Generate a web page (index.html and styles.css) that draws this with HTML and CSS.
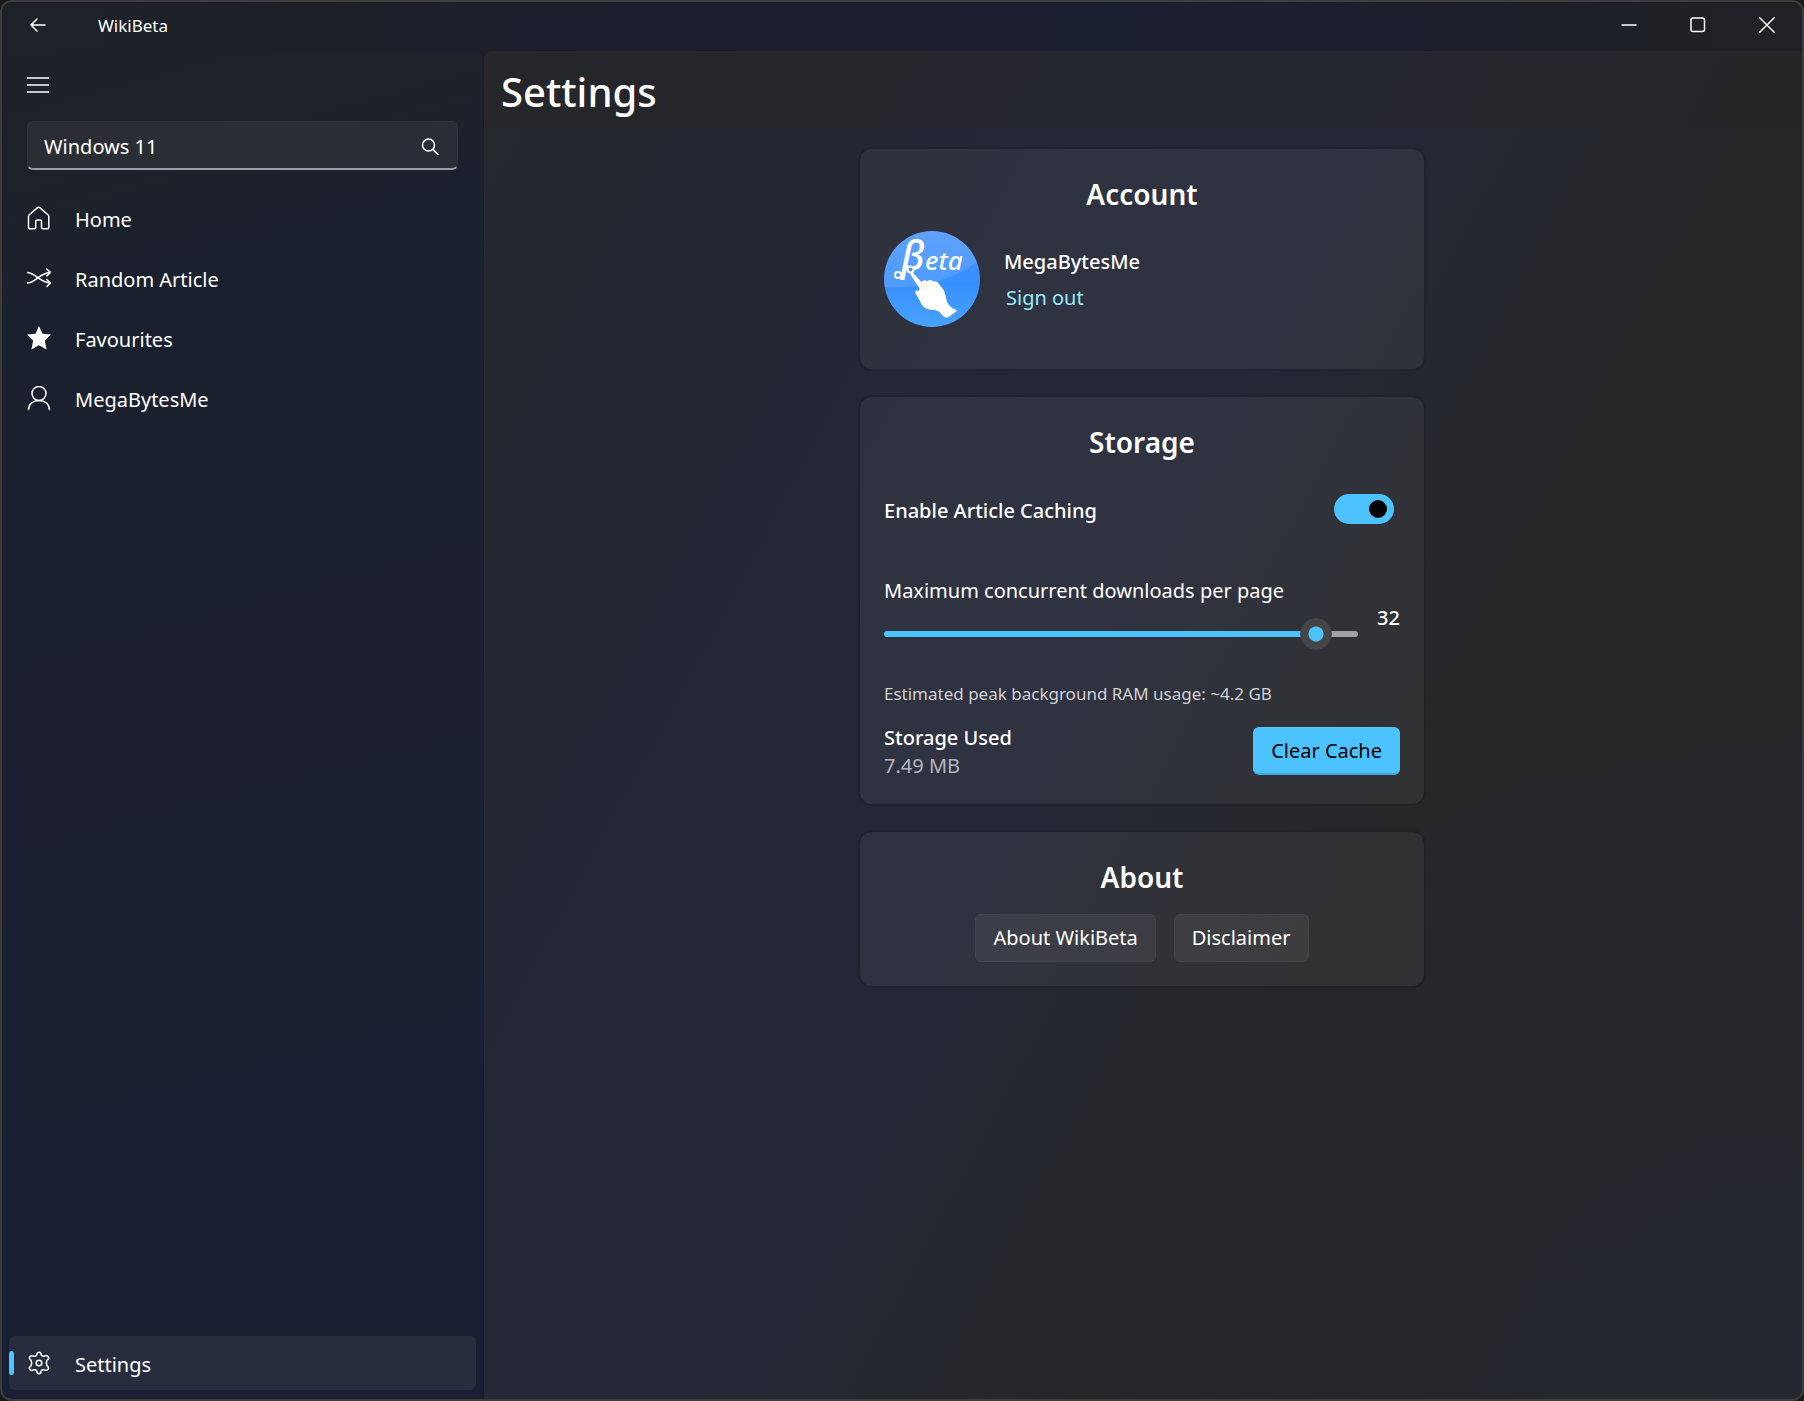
FILE: index.html
```html
<!DOCTYPE html>
<html lang="en-GB">
<head>
<meta charset="utf-8">
<meta name="viewport" content="width=device-width, initial-scale=1">
<title>WikiBeta</title>
<link rel="stylesheet" href="styles.css">
</head>
<body>
<div class="window">
  <header class="titlebar">
    <button class="back" type="button" aria-label="Back">
      <svg class="stroke" width="16" height="16" viewBox="0 0 16 16"><path d="M15 8H1M7 2L1 8l6 6"/></svg>
    </button>
    <span class="app-name">WikiBeta</span>
    <div class="captions">
      <button class="caption" type="button" aria-label="Minimise">
        <svg class="stroke" width="16" height="16" viewBox="0 0 16 16"><path d="M1 8h14"/></svg>
      </button>
      <button class="caption" type="button" aria-label="Maximise">
        <svg class="stroke" width="16" height="16" viewBox="0 0 16 16"><rect x="1" y="1" width="13.500" height="13.500" rx="2"/></svg>
      </button>
      <button class="caption" type="button" aria-label="Close">
        <svg class="stroke" width="16" height="16" viewBox="0 0 16 16"><path d="M.7.7l14.500 14.500M15.200.7L.7 15.200"/></svg>
      </button>
    </div>
  </header>

  <div class="shell">
    <nav class="sidebar" aria-label="Main">
      <button class="menu" type="button" aria-label="Toggle menu">
        <svg class="stroke" width="22" height="22" viewBox="0 0 22 22"><path d="M0 4h22M0 11h22M0 18h22"/></svg>
      </button>

      <form class="search" role="search">
        <input class="search-input" type="text" value="Windows 11" aria-label="Search articles">
        <button class="search-button" type="button" aria-label="Search">
          <svg class="stroke" width="18" height="18" viewBox="0 0 18 18"><circle cx="7.500" cy="7" r="6"/><path d="M11.900 11.400L17 16.500"/></svg>
        </button>
      </form>

      <ul class="nav-list">
        <li><a class="nav-item" href="#home">
          <svg class="stroke" width="24" height="24" viewBox="0 0 24 24"><path d="M10.500 1.600 2.300 8.800Q1.500 9.500 1.500 10.600V21Q1.500 22.800 3.300 22.800H7.200Q8.700 22.800 8.700 21.300V15.500Q8.700 14 10.200 14H13Q14.500 14 14.500 15.500V21.300Q14.500 22.800 16 22.800H20Q21.800 22.800 21.800 21V10.600Q21.800 9.500 21 8.800L12.800 1.600Q11.700.7 10.500 1.600Z"/></svg>
          <span>Home</span></a></li>
        <li><a class="nav-item" href="#random">
          <svg class="stroke" width="24" height="24" viewBox="0 0 24 24"><path d="M0 6.500C9 6.500 12 17 24 17M0 17C9 17 12 6.500 24 6.500M19.800 3l3.700 3.500-3.700 3.500M19.800 13.500l3.700 3.500-3.700 3.500"/></svg>
          <span>Random Article</span></a></li>
        <li><a class="nav-item" href="#favourites">
          <svg class="solid" width="24" height="24" viewBox="0 0 24 24"><path d="M12 0l3.500 7.700 8.500.9-6.200 5.800L19.600 23.500 12 19.300 4.400 23.500 6.200 14.400 0 8.600l8.500-.9z"/></svg>
          <span>Favourites</span></a></li>
        <li><a class="nav-item" href="#profile">
          <svg class="stroke" width="24" height="24" viewBox="0 0 24 24"><circle cx="12" cy="7.500" r="7"/><path d="M1.500 24C1.500 18 6 14.500 12 14.500S22.500 18 22.500 24"/></svg>
          <span>MegaBytesMe</span></a></li>
      </ul>

      <a class="nav-item nav-settings" href="#settings" aria-current="page">
        <svg class="stroke" width="24" height="24" viewBox="0 0 24 24"><path d="M9.600 4.300Q10 1.200 12 1.200T14.400 4.300Q14.900 5.600 17.500 5.100 20.200 3.800 21.300 5.800T20 9.200Q18.600 12 20 14.800 22.400 16.500 21.300 18.200T17.500 18.900Q14.900 18.400 14.400 19.700 14 22.800 12 22.800T9.600 19.700Q9.100 18.400 6.500 18.900 3.800 20.200 2.700 18.200T4 14.800Q5.400 12 4 9.200 1.600 7.500 2.700 5.800T6.500 5.100Q9.100 5.600 9.600 4.300Z"/><circle cx="12" cy="12" r="2.800"/></svg>
        <span>Settings</span></a>
    </nav>

    <main class="content">
      <h1 class="page-title">Settings</h1>
      <div class="cards">
        <section class="card">
          <h2 class="card-title">Account</h2>
          <div class="account">
            <svg class="avatar" viewBox="0 0 96 96" role="img" aria-label="Profile picture">
              <defs><linearGradient id="sky" x1="0" y1="0" x2="0" y2="1"><stop offset="0" stop-color="#4a94fc"/><stop offset=".55" stop-color="#378ffe"/><stop offset="1" stop-color="#48a2ff"/></linearGradient>
              <clipPath id="disc"><circle cx="48" cy="48" r="48"/></clipPath></defs>
              <g clip-path="url(#disc)">
                <rect width="96" height="96" fill="url(#sky)"/>
                <path d="M0 0H96V28C72 48 40 58 0 56Z" fill="#fff" opacity=".12"/>
              </g>
              <text class="mark-beta" x="17" y="39">β</text>
              <text class="mark-eta" x="41" y="39">eta</text>
              <g fill="#4a95ff" stroke="#fff" stroke-width="2"><circle cx="14" cy="44" r="3"/><circle cx="26.500" cy="38.500" r="3"/></g>
              <path d="M25.500 42Q27.500 39 30 43L37.500 51Q40 48 43 50.200 46.500 47.500 49.500 50.500 53 49.500 55.500 53.500L60 59.500Q62 66 63 70.500 64.500 76 73.500 79.500L64 86.500Q61 87 59 85L55 80.500Q51 78.500 45 78.500 38 77 36 70L31.500 62.500Q30.500 58.500 34.500 60L35.500 57.500Z" fill="#fff"/>
            </svg>
            <div class="account-text">
              <strong class="strong">MegaBytesMe</strong>
              <a class="signout" href="#signout">Sign out</a>
            </div>
          </div>
        </section>

        <section class="card">
          <h2 class="card-title">Storage</h2>
          <div class="toggle-row">
            <label class="strong toggle-label" for="caching">Enable Article Caching</label>
            <input class="toggle" id="caching" type="checkbox" role="switch" checked>
          </div>
          <div class="slider-row">
            <div class="slider-field">
              <label for="downloads">Maximum concurrent downloads per page</label>
              <input class="slider" id="downloads" type="range" min="0" max="34" value="32">
            </div>
            <output class="strong slider-value" for="downloads">32</output>
          </div>
          <p class="hint">Estimated peak background RAM usage: ~4.2 GB</p>
          <div class="used-row">
            <div class="used">
              <strong class="strong">Storage Used</strong>
              <span class="muted">7.49 MB</span>
            </div>
            <button class="button button-accent" type="button">Clear Cache</button>
          </div>
        </section>

        <section class="card">
          <h2 class="card-title">About</h2>
          <div class="about-actions">
            <button class="button" type="button">About WikiBeta</button>
            <button class="button" type="button">Disclaimer</button>
          </div>
        </section>
      </div>
    </main>
  </div>
</div>
</body>
</html>
```
FILE: styles.css
```css
*, *::before, *::after { box-sizing: border-box; }

body {
  margin: 0;
  background: #1a1a1a;
  color: #fff;
  font: 20px/28px "Noto Sans", "Open Sans", sans-serif;
}

h1, h2, p, ul { margin: 0; padding: 0; }
ul { list-style: none; }
a { color: inherit; text-decoration: none; }
button, input { font: inherit; color: inherit; }
button { padding: 0; border: 0; background: none; }
svg { display: block; flex: none; }

.stroke { fill: none; stroke: #fff; stroke-width: 1.5; stroke-linecap: round; stroke-linejoin: round; }
.solid { fill: #fff; }
.strong { font-weight: 500; }

.window {
  display: flex;
  flex-direction: column;
  min-height: 100vh;
  border: 2px solid #3d3d3d;
  border-radius: 12px;
  overflow: hidden;
  background: linear-gradient(165deg, #1e2127 0%, #1d2128 9%, #1b202e 18%, #1b1f32 50%, #1b1f34 100%);
}

.titlebar {
  display: flex;
  align-items: center;
  height: 49px;
  padding-bottom: 4px;
  background: linear-gradient(90deg, #1e2127 0%, #1d2028 18%, #1b1f2f 40%, #1b1f32 62%, #1d2029 85%, #202124 100%);
}
.back { padding: 0 28px; }
.app-name { margin-left: 24px; padding-top: 2px; font-size: 17px; line-height: 24px; }
.captions { display: flex; margin-left: auto; padding-right: 1px; }
.caption { display: grid; place-items: center; width: 69px; height: 45px; }

.shell { display: flex; flex: 1; }

.sidebar {
  display: flex;
  flex-direction: column;
  flex: 0 0 482px;
  padding: 16px 8px 9px 7px;
}
.menu { align-self: flex-start; padding: 7px 18px; }

.search {
  display: flex;
  align-items: center;
  height: 49px;
  margin: 18px 18px 22px 18px;
  border: 1px solid rgba(255, 255, 255, .03);
  border-bottom: 2px solid #9a9da3;
  border-radius: 6px;
  background: rgba(255, 255, 255, .06);
}
.search-input {
  flex: 1;
  min-width: 0;
  padding: 3px 16px 0;
  border: 0;
  outline: 0;
  background: none;
}
.search-button { padding: 4px 18px 0; }

.nav-list { display: grid; gap: 6px; }
.nav-item {
  display: flex;
  align-items: center;
  gap: 24px;
  height: 54px;
  padding: 0 18px 2px;
  border-radius: 6px;
}
.nav-item span { padding-top: 4px; }
.nav-settings {
  position: relative;
  margin-top: auto;
  padding-bottom: 0;
  background: rgba(255, 255, 255, .06);
}
.nav-settings::before {
  content: "";
  position: absolute;
  left: 0;
  top: 15px;
  width: 5px;
  height: 24px;
  border-radius: 3px;
  background: #4cc2ff;
}

.content {
  flex: 1;
  min-width: 0;
  padding: 11px 18px 24px 16px;
  border-top-left-radius: 8px;
  box-shadow: 0 0 2px 1px rgba(0, 0, 0, .16);
  background:
    linear-gradient(rgba(36, 37, 38, .5), rgba(36, 37, 38, .5)) 0 0 / 100% 77px no-repeat,
    radial-gradient(ellipse at 100% 108%, rgba(36, 39, 50, .9), rgba(36, 39, 50, 0) 45%),
    linear-gradient(118deg, #25282c 0%, #242730 9%, #242733 24%, #242737 42%, #252732 51%, #25272c 59%, #262628 65%, #262627 100%);
}
.page-title { padding-left: 1px; font-size: 40px; line-height: 60px; font-weight: 500; }

.cards {
  display: grid;
  gap: 28px;
  max-width: 564px;
  margin: 27px auto 0;
}
.card {
  padding: 24px;
  border-radius: 12px;
  box-shadow: 0 0 0 2px rgba(0, 0, 0, .1);
  background: rgba(255, 255, 255, .05);
}
.card-title { font-size: 28px; line-height: 42px; font-weight: 600; text-align: center; }

.account { display: flex; gap: 24px; padding: 16px 0 18px; }
.avatar { width: 96px; height: 96px; overflow: visible; }
.mark-beta { font: italic 500 40px "Noto Sans", sans-serif; fill: #fff; }
.mark-eta { font: italic 500 26px "Noto Sans", sans-serif; fill: #fff; }
.account-text { display: grid; align-content: start; gap: 8px; padding-top: 17px; }
.signout { padding-left: 2px; color: #99ebff; }

.toggle-row {
  display: flex;
  align-items: center;
  justify-content: space-between;
  padding: 30px 6px 0 0;
}
.toggle-label { padding-top: 4px; }
.toggle {
  appearance: none;
  width: 60px;
  height: 30px;
  margin: 0;
  padding: 6px 7px 6px 35px;
  border-radius: 15px;
  background: #4cc2ff;
}
.toggle::before {
  content: "";
  display: block;
  width: 18px;
  height: 18px;
  border-radius: 50%;
  background: #000;
}
.toggle:not(:checked) { padding-left: 7px; background: #9a9da3; }

.slider-row { display: flex; align-items: center; justify-content: space-between; margin-top: 52px; }
.slider-field { display: grid; gap: 13px; width: 474px; }
.slider { appearance: none; width: 100%; height: 32px; margin: 0; background: none; }
.slider::-webkit-slider-runnable-track {
  height: 6px;
  border-radius: 3px;
  background: linear-gradient(90deg, #4cc2ff 92%, #a0a0a5 92%);
}
.slider::-webkit-slider-thumb {
  appearance: none;
  width: 32px;
  height: 32px;
  margin-top: -13px;
  border: 1px solid #3f434e;
  border-radius: 50%;
  background: radial-gradient(circle, #4cc2ff 7px, #454545 8px);
}
.slider-value { padding-top: 8px; }

.hint { margin-top: 32px; font-size: 17px; line-height: 24px; color: #cfd0d4; }
.used-row { display: flex; align-items: center; justify-content: space-between; margin-top: 16px; }
.used { display: grid; padding-top: 2px; }
.muted { color: #b4b5ba; }

.button {
  height: 48px;
  padding: 0 17px;
  border: 1px solid rgba(255, 255, 255, .03);
  border-radius: 6px;
  background: rgba(255, 255, 255, .06);
}
.button-accent {
  border-color: #58c6ff #4cc2ff #42a8dd;
  border-bottom-width: 2px;
  background: #4cc2ff;
  color: #000;
}
.about-actions { display: flex; justify-content: center; gap: 18px; padding-top: 16px; }
```
